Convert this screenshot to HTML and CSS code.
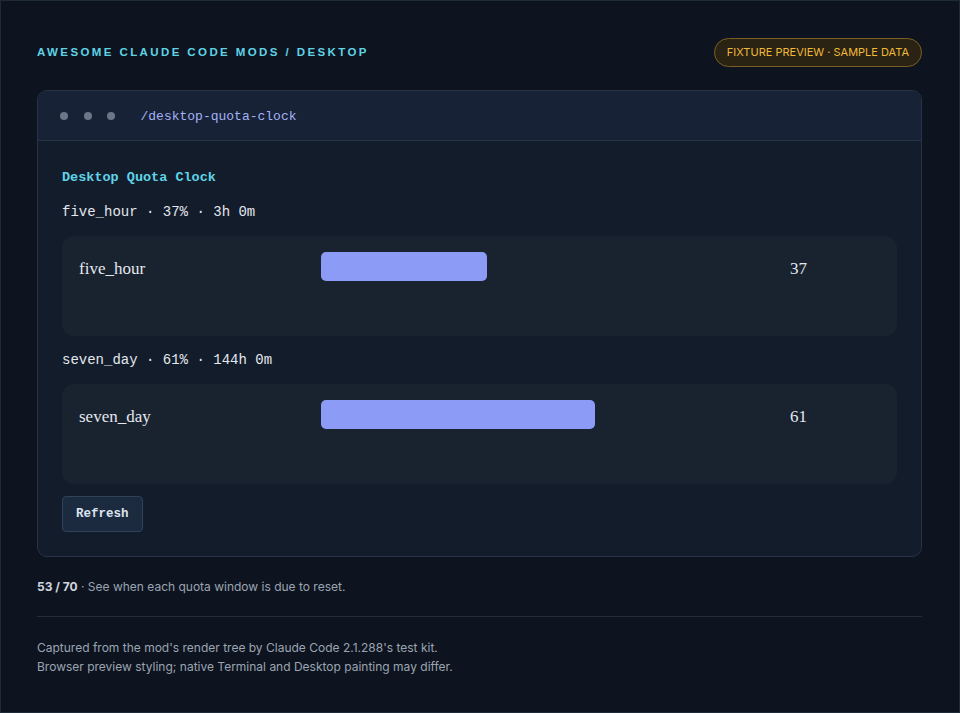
FILE: index.html
```html
<!DOCTYPE html>
<html lang="en">
<head>
    <meta charset="UTF-8">
    <meta name="viewport" content="width=device-width, initial-scale=1.0">
    <title>Desktop Quota Clock</title>
    <link rel="stylesheet" href="styles.css">
</head>
<body>
    <div class="page">
        <header class="top">
            <div class="brand">Awesome Claude Code Mods / Desktop</div>
            <div class="badge">FIXTURE PREVIEW · SAMPLE DATA</div>
        </header>

        <div class="window">
            <div class="window-bar">
                <span class="dot"></span>
                <span class="dot"></span>
                <span class="dot"></span>
                <span class="cmd">/desktop-quota-clock</span>
            </div>
            <div class="window-body">
                <div class="mod-title">Desktop Quota Clock</div>

                <div class="quota-line">five_hour · 37% · 3h 0m</div>
                <div class="quota-row">
                    <div class="quota-label">five_hour</div>
                    <div class="quota-track">
                        <div class="quota-fill" style="width: 37%;"></div>
                    </div>
                    <div class="quota-value">37</div>
                </div>

                <div class="quota-line">seven_day · 61% · 144h 0m</div>
                <div class="quota-row">
                    <div class="quota-label">seven_day</div>
                    <div class="quota-track">
                        <div class="quota-fill" style="width: 61%;"></div>
                    </div>
                    <div class="quota-value">61</div>
                </div>

                <button class="refresh">Refresh</button>
            </div>
        </div>

        <p class="summary"><strong>53 / 70</strong> · See when each quota window is due to reset.</p>

        <footer class="notes">
            <p>Captured from the mod's render tree by Claude Code 2.1.288's test kit.</p>
            <p>Browser preview styling; native Terminal and Desktop painting may differ.</p>
        </footer>
    </div>
</body>
</html>
```

FILE: styles.css
```css
* {
    margin: 0;
    padding: 0;
    box-sizing: border-box;
}

:root {
    --bg: #0e141f;
    --panel: #131c2b;
    --panel-bar: #172236;
    --row: #19222f;
    --line: #263246;
    --cyan: #5fd3e6;
    --lavender: #a4b1f5;
    --bar: #8c9cf6;
    --text: #e3e7ee;
    --muted: #9ba4b2;
    --mono: 'Liberation Mono', 'Courier New', monospace;
    --sans: 'Inter', 'Liberation Sans', Arial, sans-serif;
}

html, body {
    height: 100%;
}

body {
    background-color: var(--bg);
    color: var(--text);
    font-family: var(--sans);
    border: 1px solid #1f2a38;
}

.page {
    padding: 36px 37px 0 36px;
}

.top {
    display: flex;
    justify-content: space-between;
    align-items: center;
    height: 30px;
    margin-bottom: 23px;
}

.brand {
    font-family: 'Liberation Sans', Arial, sans-serif;
    color: var(--cyan);
    font-size: 11.5px;
    font-weight: 700;
    letter-spacing: 2.4px;
    text-transform: uppercase;
}

.badge {
    color: #f0b93a;
    background-color: #2a2212;
    border: 1px solid #7a5f22;
    border-radius: 15px;
    padding: 0 12px;
    height: 29px;
    line-height: 27px;
    font-size: 11px;
}

.window {
    background-color: var(--panel);
    border: 1px solid var(--line);
    border-radius: 10px;
    overflow: hidden;
}

.window-bar {
    display: flex;
    align-items: center;
    height: 50px;
    padding: 1px 0 0 22px;
    background-color: var(--panel-bar);
    border-bottom: 1px solid var(--line);
}

.dot {
    width: 8px;
    height: 8px;
    border-radius: 50%;
    background-color: #6c7688;
    margin-right: 15.5px;
}

.cmd {
    margin-left: 10px;
    font-family: var(--mono);
    font-size: 13px;
    color: var(--lavender);
}

.window-body {
    padding: 29px 24px 24px;
}

.mod-title {
    font-family: var(--mono);
    font-weight: 700;
    font-size: 13.5px;
    color: var(--cyan);
    margin-bottom: 19px;
}

.quota-line {
    font-family: var(--mono);
    font-size: 14px;
    color: var(--text);
    line-height: 16px;
    margin-bottom: 16px;
}

.quota-row {
    display: grid;
    grid-template-columns: 222px 449px 1fr;
    align-items: start;
    column-gap: 20px;
    height: 100px;
    padding: 16px 17px;
    margin-bottom: 16px;
    background-color: var(--row);
    border-radius: 12px;
    font-family: 'Liberation Serif', 'Times New Roman', serif;
    font-size: 17px;
    line-height: 34px;
}

.quota-track {
    height: 29px;
}

.quota-fill {
    height: 29px;
    background-color: var(--bar);
    border-radius: 5px;
}

.refresh {
    margin-top: -4px;
    padding: 0 13px;
    height: 36px;
    font-family: var(--mono);
    font-weight: 700;
    font-size: 12.5px;
    color: #dde4ef;
    background-color: #1c2a40;
    border: 1px solid #304259;
    border-radius: 4px;
}

.summary {
    margin-top: 22px;
    font-size: 12px;
    color: var(--muted);
    padding-bottom: 22px;
    border-bottom: 1px solid #222c3a;
}

.summary strong {
    color: #d0d6df;
}

.notes {
    padding-top: 21px;
    font-size: 12px;
    line-height: 19px;
    color: var(--muted);
}
```
